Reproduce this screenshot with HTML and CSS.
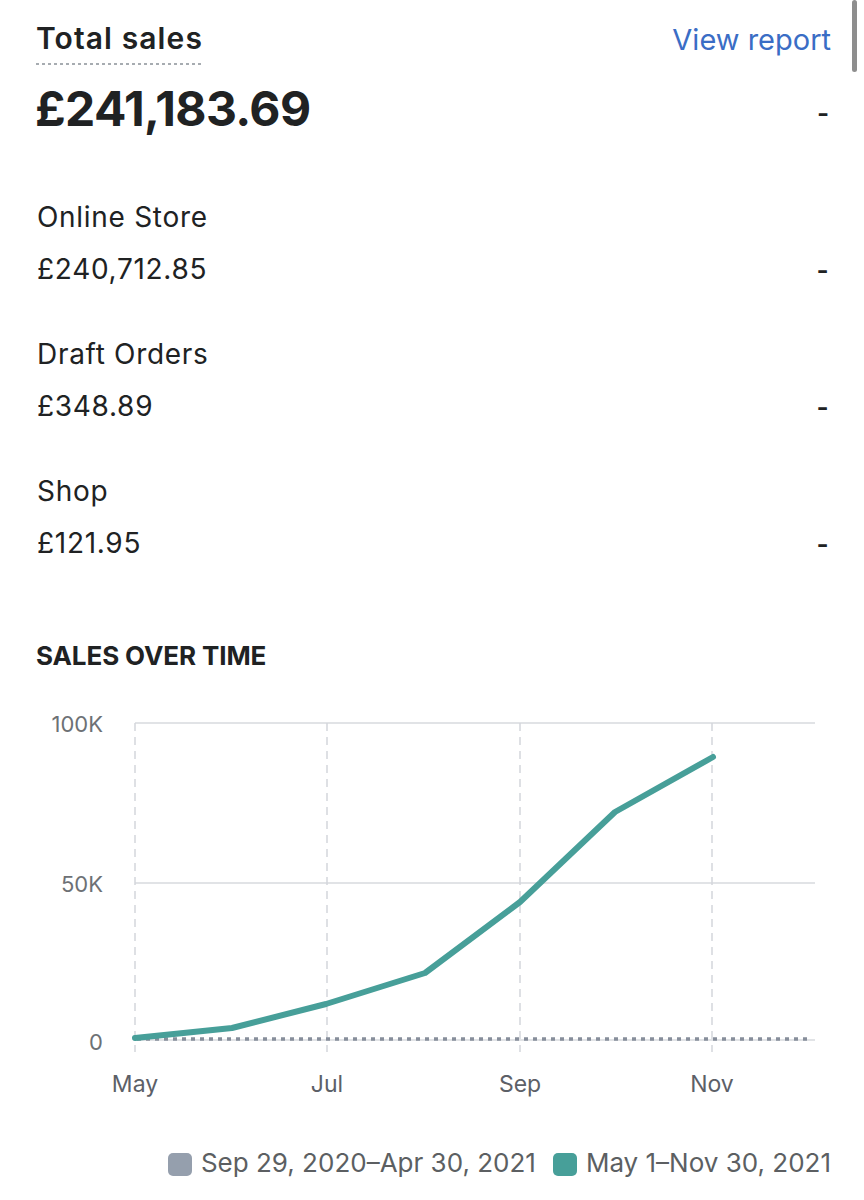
FILE: index.html
```html
<!DOCTYPE html>
<html lang="en">
<head>
<meta charset="utf-8">
<title>Total sales</title>
<link rel="stylesheet" href="styles.css">
</head>
<body>
<main class="page">
  <header class="head">
    <h1 class="title">Total sales</h1>
    <a class="link" href="#">View report</a>
  </header>
  <div class="total-row">
    <span class="total">£241,183.69</span>
    <span class="dash">-</span>
  </div>

  <ul class="channels">
    <li class="channel">
      <div class="ch-name">Online Store</div>
      <div class="ch-row"><span>£240,712.85</span><span class="dash">-</span></div>
    </li>
    <li class="channel">
      <div class="ch-name">Draft Orders</div>
      <div class="ch-row"><span>£348.89</span><span class="dash">-</span></div>
    </li>
    <li class="channel">
      <div class="ch-name">Shop</div>
      <div class="ch-row"><span>£121.95</span><span class="dash">-</span></div>
    </li>
  </ul>

  <h2 class="section">SALES OVER TIME</h2>

  <svg class="chart" width="864" height="410" viewBox="0 0 864 410" xmlns="http://www.w3.org/2000/svg">
    <g class="grid-h">
      <line x1="135" y1="23" x2="815" y2="23"/>
      <line x1="135" y1="183" x2="815" y2="183"/>
      <line x1="135" y1="340" x2="815" y2="340"/>
    </g>
    <g class="grid-v">
      <line x1="135" y1="23" x2="135" y2="352"/>
      <line x1="327" y1="23" x2="327" y2="352"/>
      <line x1="520" y1="23" x2="520" y2="352"/>
      <line x1="712" y1="23" x2="712" y2="352"/>
    </g>
    <line class="prev" x1="137" y1="339" x2="808" y2="339"/>
    <polyline class="curr" points="135,338 232,328 326,304 425,273 520,202 615,112 713,57"/>
    <g class="ylab">
      <text x="103" y="32">100K</text>
      <text x="103" y="192">50K</text>
      <text x="103" y="350">0</text>
    </g>
    <g class="xlab">
      <text x="135" y="392">May</text>
      <text x="327" y="392">Jul</text>
      <text x="520" y="392">Sep</text>
      <text x="712" y="392">Nov</text>
    </g>
  </svg>

  <div class="legend">
    <span class="item"><span class="swatch swatch-prev"></span>Sep 29, 2020–Apr 30, 2021</span>
    <span class="item"><span class="swatch swatch-curr"></span>May 1–Nov 30, 2021</span>
  </div>
</main>
<div class="scrollbar"></div>
</body>
</html>
```

FILE: styles.css
```css
* { box-sizing: border-box; }

html, body {
  margin: 0;
  padding: 0;
  background: #ffffff;
}

body {
  font-family: Inter, "Noto Sans", "Liberation Sans", sans-serif;
  color: #202223;
  width: 864px;
  height: 1200px;
  overflow: hidden;
  position: relative;
}

.page {
  padding: 20px 0 0 0;
}

.head {
  display: flex;
  justify-content: space-between;
  align-items: flex-start;
  padding: 0 33px 0 36px;
}

.title {
  margin: 0;
  font-size: 30px;
  line-height: 36px;
  font-weight: 600;
  letter-spacing: 1.1px;
  padding-bottom: 7px;
  background-image: linear-gradient(to right, #a7acb1 55%, transparent 55%);
  background-size: 6px 2px;
  background-repeat: repeat-x;
  background-position: left bottom;
  height: 45px;
}

.link {
  margin-top: 2px;
  font-size: 29px;
  line-height: 36px;
  color: #3a6dc5;
  text-decoration: none;
}

.total-row {
  display: flex;
  justify-content: space-between;
  align-items: center;
  margin-top: 16px;
  padding: 0 35px 0 35px;
  height: 56px;
}

.total {
  font-size: 48px;
  line-height: 56px;
  font-weight: 700;
  letter-spacing: -0.6px;
}

.dash {
  font-family: "Liberation Sans", Arial, sans-serif;
  font-size: 35px;
  line-height: 34px;
  color: #202223;
}

.total-row .dash {
  margin-top: 6px;
}

.channels {
  list-style: none;
  margin: 63px 0 0 0;
  padding: 0 35px 0 37px;
  display: flex;
  flex-direction: column;
  gap: 51px;
}

.channel {
  display: flex;
  flex-direction: column;
  gap: 18px;
}

.ch-name,
.ch-row {
  font-size: 28px;
  line-height: 34px;
  letter-spacing: 0.7px;
}

.ch-row {
  display: flex;
  justify-content: space-between;
  align-items: center;
}

.section {
  margin: 80px 0 0 0;
  padding-left: 36px;
  font-size: 26px;
  line-height: 32px;
  font-weight: 700;
  letter-spacing: -0.1px;
}

.chart {
  display: block;
  margin-top: 28px;
}

.grid-h line {
  stroke: #e1e3e6;
  stroke-width: 2;
}

.grid-v line {
  stroke: #d3d6db;
  stroke-width: 1.5;
  stroke-dasharray: 8 6;
}

.prev {
  stroke: #878e9b;
  stroke-width: 3.5;
  stroke-dasharray: 4 5;
}

.curr {
  fill: none;
  stroke: #479f99;
  stroke-width: 6;
  stroke-linejoin: round;
  stroke-linecap: round;
}

.ylab text {
  font-family: Inter, "Noto Sans", "Liberation Sans", sans-serif;
  font-size: 22px;
  fill: #6d7175;
  text-anchor: end;
}

.xlab text {
  font-family: Inter, "Noto Sans", "Liberation Sans", sans-serif;
  font-size: 23px;
  fill: #5c6067;
  text-anchor: middle;
}

.legend {
  display: flex;
  justify-content: flex-end;
  gap: 17px;
  margin-top: 37px;
  padding-right: 33px;
  font-size: 26px;
  line-height: 32px;
  color: #5c5f62;
}

.item {
  display: flex;
  align-items: center;
}

.swatch {
  width: 24px;
  height: 23px;
  border-radius: 5px;
  margin-right: 9px;
  margin-top: 3px;
}

.swatch-prev { background: #959fad; }
.swatch-curr { background: #479f99; }

.scrollbar {
  position: absolute;
  top: 0;
  left: 852px;
  width: 5px;
  height: 72px;
  border-radius: 3px;
  background: #8e8e8e;
}
```
